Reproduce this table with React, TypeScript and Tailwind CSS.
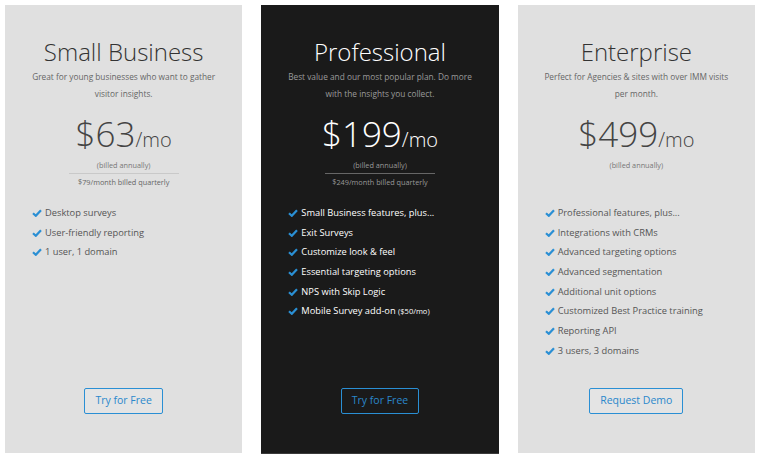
import React from "react";

type Plan = {
  name: string;
  blurb: string[];
  price: string;
  quarterly?: string;
  features: React.ReactNode[];
  cta: string;
  dark?: boolean;
};

const plans: Plan[] = [
  {
    name: "Small Business",
    blurb: ["Great for young businesses who want to gather", "visitor insights."],
    price: "$63",
    quarterly: "$79/month billed quarterly",
    features: ["Desktop surveys", "User-friendly reporting", "1 user, 1 domain"],
    cta: "Try for Free",
  },
  {
    name: "Professional",
    blurb: ["Best value and our most popular plan. Do more", "with the insights you collect."],
    price: "$199",
    quarterly: "$249/month billed quarterly",
    features: [
      "Small Business features, plus...",
      "Exit Surveys",
      "Customize look & feel",
      "Essential targeting options",
      "NPS with Skip Logic",
      <>
        Mobile Survey add-on <span className="text-[7.5px]">($50/mo)</span>
      </>,
    ],
    cta: "Try for Free",
    dark: true,
  },
  {
    name: "Enterprise",
    blurb: ["Perfect for Agencies & sites with over IMM visits", "per month."],
    price: "$499",
    features: [
      "Professional features, plus...",
      "Integrations with CRMs",
      "Advanced targeting options",
      "Advanced segmentation",
      "Additional unit options",
      "Customized Best Practice training",
      "Reporting API",
      "3 users, 3 domains",
    ],
    cta: "Request Demo",
  },
];

const Check = () => (
  <svg width="10" height="8" viewBox="0 0 10 8" className="shrink-0">
    <path d="M1 4.2 L3.8 6.8 L9 1.2" fill="none" stroke="#2a8fd4" strokeWidth="2.2" />
  </svg>
);

const Card = ({ plan }: { plan: Plan }) => {
  const dark = plan.dark;
  return (
    <div
      className={`flex h-[448px] flex-col items-center ${
        dark ? "bg-[#1a1a1a] shadow-[0_1px_0_#3a3a3a]" : "bg-[#e0e0e0]"
      }`}
    >
      <div className="flex h-[197px] w-full flex-col items-center pt-[31px]">
        <h2
          className={`text-[24px] font-light leading-[32px] ${dark ? "text-white" : "text-[#333]"}`}
        >
          {plan.name}
        </h2>
        <div className={`text-center text-[8.3px] leading-[17px] ${dark ? "text-[#9a9a9a]" : "text-[#666]"}`}>
          {plan.blurb.map((b) => (
            <div key={b}>{b}</div>
          ))}
        </div>
        <div className={`mt-[15px] flex items-baseline leading-[34px] ${dark ? "text-white" : "text-[#444]"}`}>
          <span className="text-[35px] font-light">{plan.price}</span>
          <span className="text-[20px] font-light">/mo</span>
        </div>
        <div className={`mt-[2px] text-[7.3px] leading-[12px] ${dark ? "text-[#999]" : "text-[#777]"}`}>
          (billed annually)
        </div>
        {plan.quarterly && (
          <>
            <div className={`mt-[2px] h-px w-[110px] ${dark ? "bg-[#666]" : "bg-[#c9c9c9]"}`} />
            <div className={`pt-[1px] text-[7.3px] leading-[14px] ${dark ? "text-[#999]" : "text-[#666]"}`}>
              {plan.quarterly}
            </div>
          </>
        )}
      </div>
      <ul className="w-full pl-[27px] pt-[1px]">
        {plan.features.map((f, i) => (
          <li
            key={i}
            className={`flex h-[19.7px] items-center gap-[3px] text-[9.3px] ${
              dark ? "font-medium text-white" : "text-[#555]"
            }`}
          >
            <Check />
            <span>{f}</span>
          </li>
        ))}
      </ul>
      <button
        className={`mt-auto mb-[39px] h-[26px] rounded-[2px] border border-[#2a8fd4] px-[10px] text-[10.5px] text-[#2a88cc] ${
          dark ? "bg-[#1a1a1a]" : "bg-[#e4e4e4]"
        }`}
      >
        {plan.cta}
      </button>
    </div>
  );
};

export default function App() {
  return (
    <div className="h-[459px] w-[760px] bg-white px-[5px] pt-[5px] font-['Open_Sans',sans-serif]">
      <div className="grid grid-cols-3 gap-[19px]">
        {plans.map((p) => (
          <Card key={p.name} plan={p} />
        ))}
      </div>
    </div>
  );
}
